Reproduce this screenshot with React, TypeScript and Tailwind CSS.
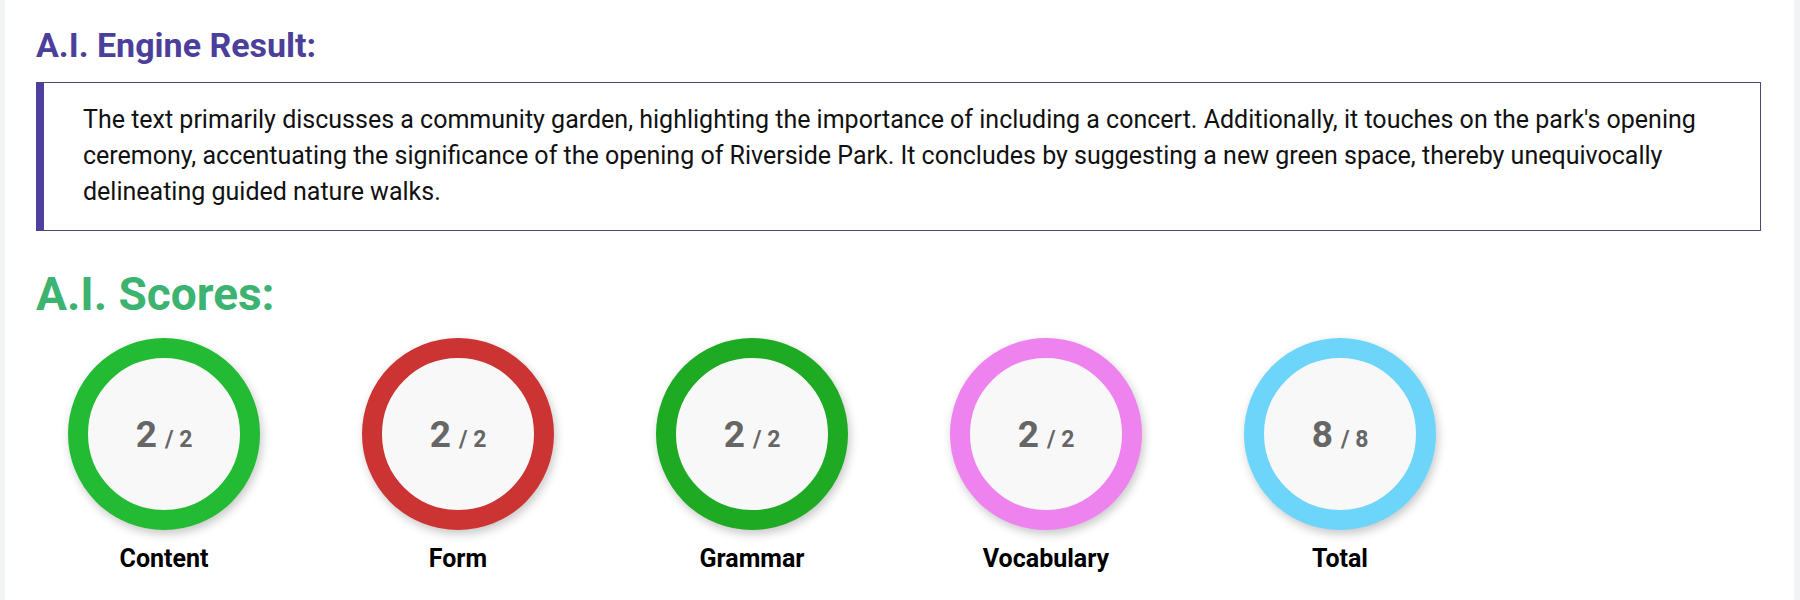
const scores = [
  { label: "Content", value: 2, max: 2, ring: "border-[#22bb33]" },
  { label: "Form", value: 2, max: 2, ring: "border-[#cc3333]" },
  { label: "Grammar", value: 2, max: 2, ring: "border-[#1eaa22]" },
  { label: "Vocabulary", value: 2, max: 2, ring: "border-[#ee82ee]" },
  { label: "Total", value: 8, max: 8, ring: "border-[#6dd5fa]" },
];

function ScoreCircle({ label, value, max, ring }: (typeof scores)[number]) {
  return (
    <div className="flex flex-col items-center w-[192px]">
      <div
        className={`w-[192px] h-[192px] rounded-full border-[20px] ${ring} bg-[#f8f8f8] flex items-center justify-center shadow-[2px_4px_10px_rgba(0,0,0,0.22)]`}
      >
        <div className="flex items-baseline text-[#666666] font-bold">
          <span className="text-[37px] leading-none">{value}</span>
          <span className="text-[23px] leading-none ml-[8px]">/ {max}</span>
        </div>
      </div>
      <div className="mt-[14px] text-[25px] leading-[30px] font-bold text-black">{label}</div>
    </div>
  );
}

export default function App() {
  return (
    <div className="h-[600px] bg-[#f1f3f5] px-[5px] pr-[6px] font-['Roboto',sans-serif]">
      <div className="h-full bg-white pl-[31px] pr-[33px] pt-[25px]">
        <h2 className="text-[34px] leading-[40px] font-bold text-[#4b3f9b]">A.I. Engine Result:</h2>
        <div className="mt-[17px] border border-[#4d4878] border-l-8 border-l-[#4f3f9f] pl-[39px] pr-10 pt-[19px] pb-5">
          <p className="text-[25px] leading-[36px] text-[#111111]">
            The text primarily discusses a community garden, highlighting the importance of including a concert. Additionally, it touches on the park's opening ceremony, accentuating the significance of the opening of Riverside Park. It concludes by suggesting a new green space, thereby unequivocally delineating guided nature walks.
          </p>
        </div>
        <h2 className="mt-[36px] text-[46px] leading-[55px] font-bold text-[#3cb371]">A.I. Scores:</h2>
        <div className="mt-[16px] flex gap-[102px] pl-[32px]">
          {scores.map((s) => (
            <ScoreCircle key={s.label} {...s} />
          ))}
        </div>
      </div>
    </div>
  );
}
